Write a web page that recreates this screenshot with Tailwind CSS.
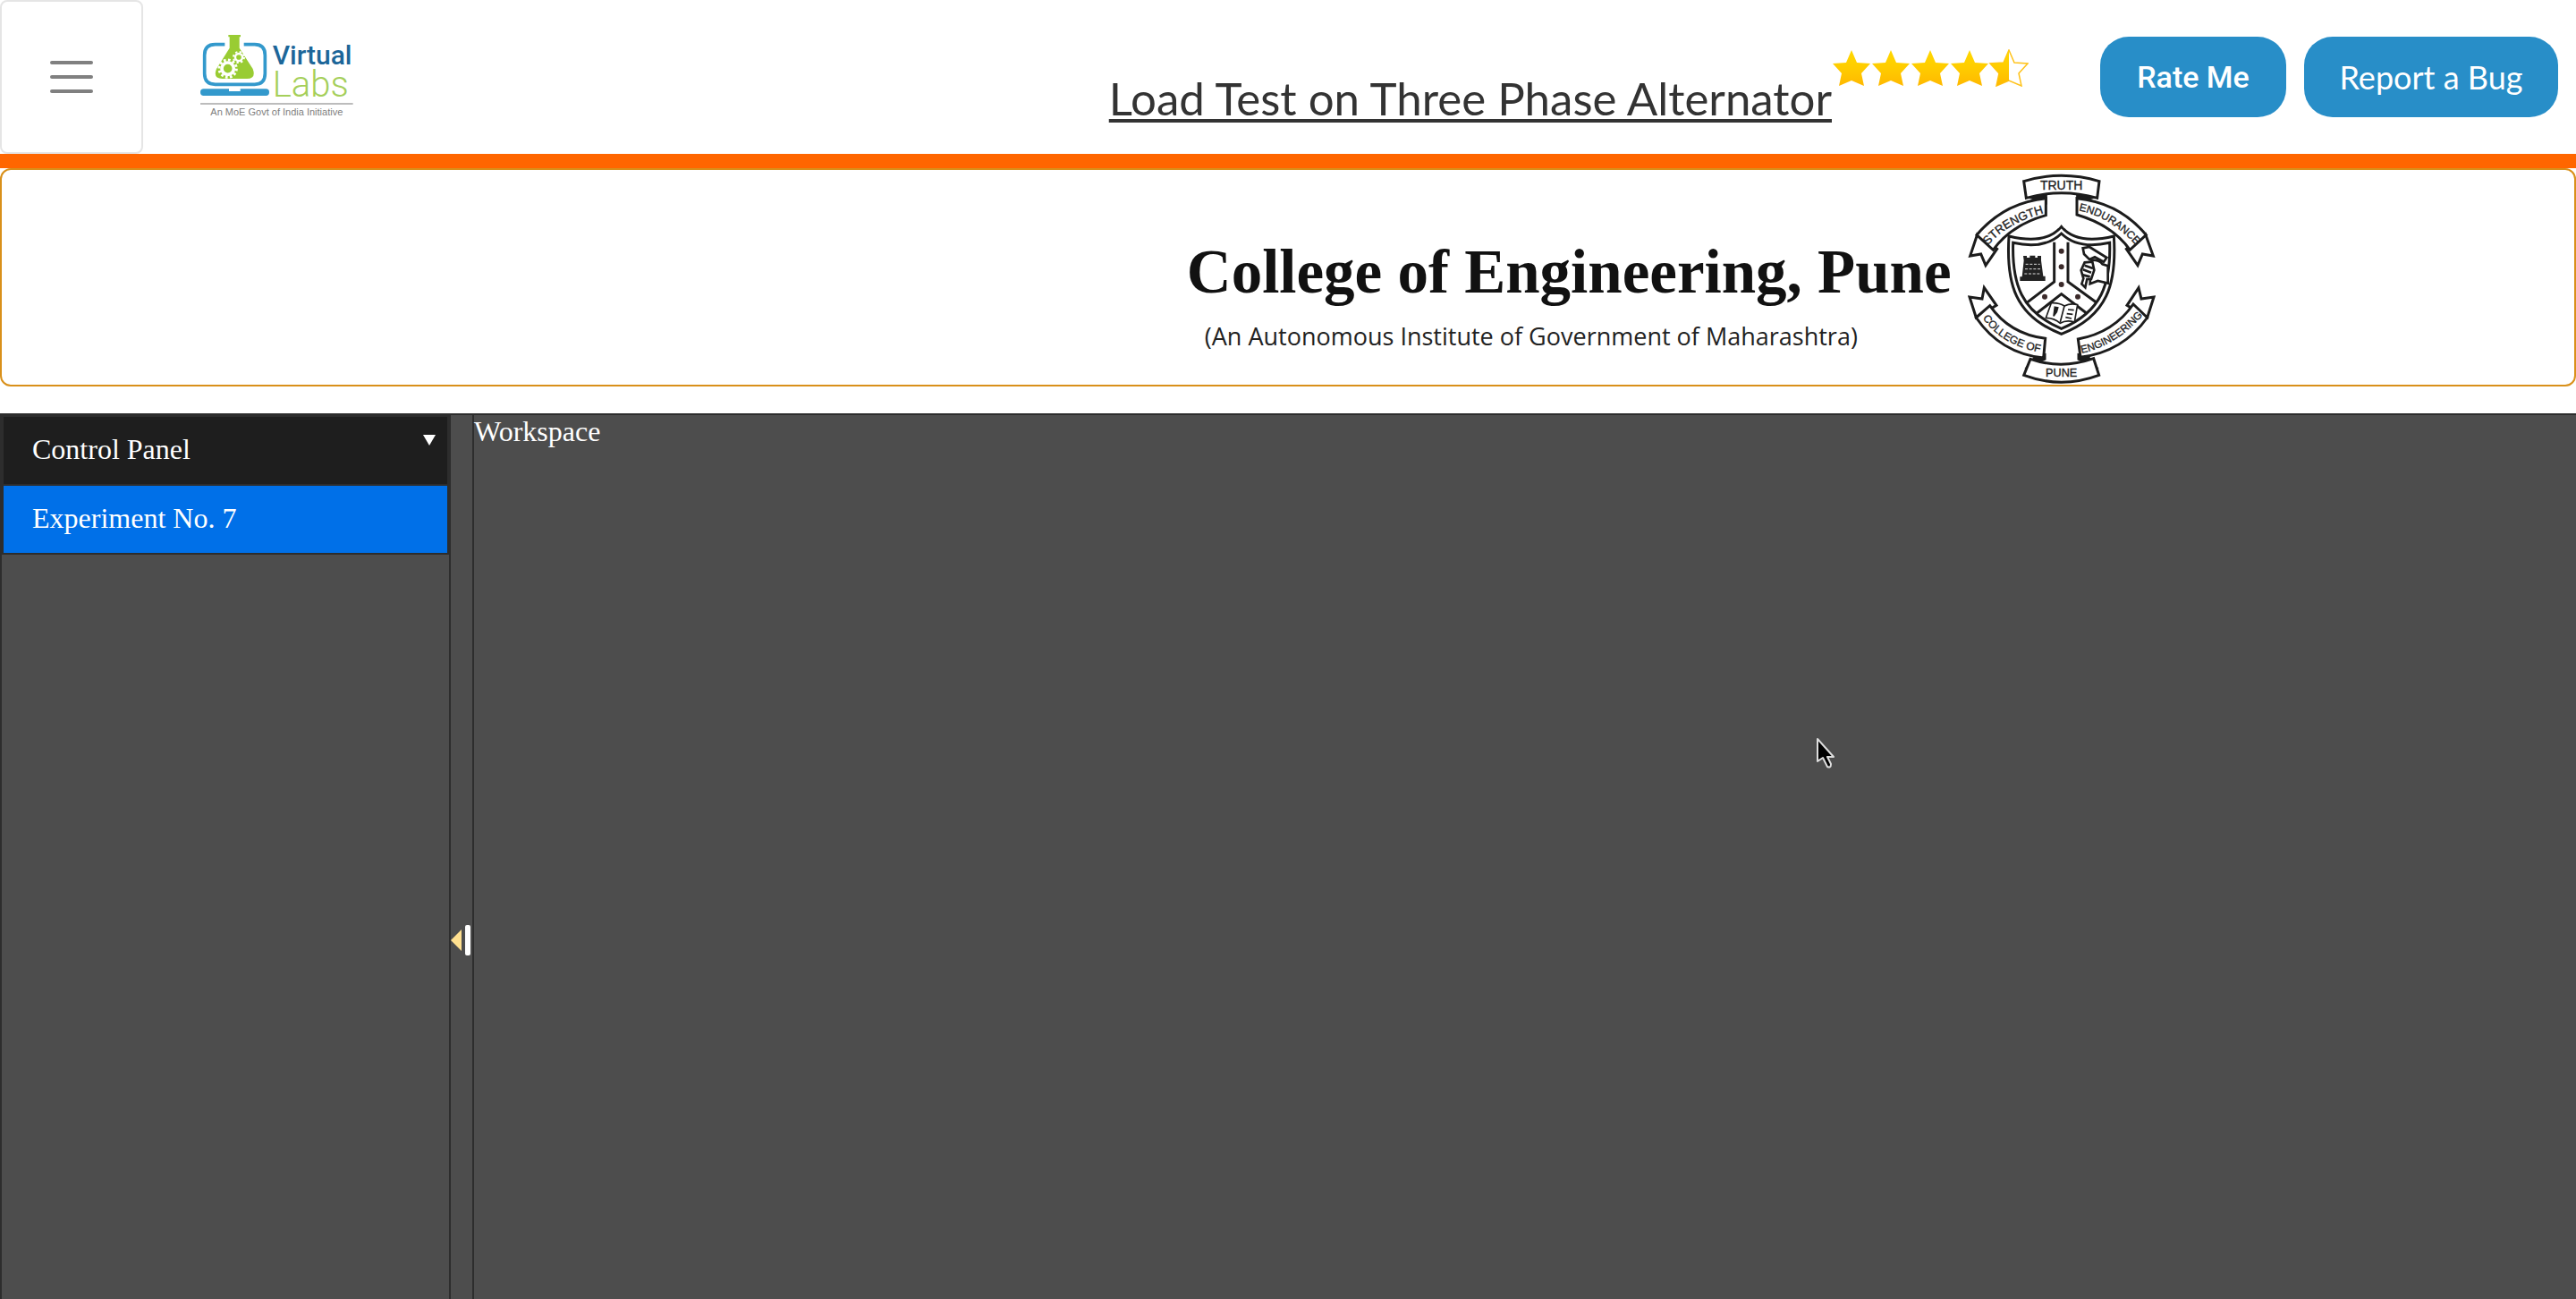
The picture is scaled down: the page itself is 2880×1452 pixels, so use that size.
<!DOCTYPE html>
<html lang="en">
<head>
<meta charset="utf-8">
<title>Load Test on Three Phase Alternator</title>
<script src="https://cdn.jsdelivr.net/npm/@tailwindcss/browser@4"></script>
</head>
<body class="flex min-h-screen flex-col bg-white">

<header class="flex h-[188px] items-center border-b-16 border-[#ff6600] pr-5">
  <button type="button" aria-label="Menu" class="flex h-full w-40 shrink-0 flex-col items-center justify-center gap-3 rounded-lg border-2 border-[#e5e5e5]">
    <span class="h-1 w-12 rounded-full bg-[#808080]"></span>
    <span class="h-1 w-12 rounded-full bg-[#808080]"></span>
    <span class="h-1 w-12 rounded-full bg-[#808080]"></span>
  </button>
  <a href="#" aria-label="Virtual Labs" class="ml-16 shrink-0">
    <svg class="h-[94px] w-[172px]" viewBox="672 116 516 282">
      <g fill="none" stroke="#3399cc" stroke-width="11">
        <path d="M754 148H722Q686 148 686 184V246Q686 282 722 282H854Q889 282 889 246V184Q889 148 854 148H818"/>
      </g>
      <path fill="#3399cc" d="M683 297H768V305H806V297H892Q903 297 903 308Q903 320 892 320H683Q672 320 672 308Q672 297 683 297Z"/>
      <path fill="#99cc33" d="M766 116H807V123H803V160L848 230Q860 263 828 263H746Q713 263 726 230L770 160V123H766Z"/>
      <g fill="none" stroke="#fff">
        <circle cx="764" cy="229" r="20" stroke-width="11"/>
        <circle cx="764" cy="229" r="29" stroke-width="9" stroke-dasharray="8 7.18"/>
        <circle cx="801" cy="191" r="12" stroke-width="7"/>
        <circle cx="801" cy="191" r="18" stroke-width="6" stroke-dasharray="7 7.14"/>
      </g>
      <text x="914" y="214" font-family="Roboto, sans-serif" font-weight="500" font-size="90" fill="#1c6699">Virtual</text>
      <text x="914" y="322" font-family="Roboto, sans-serif" font-weight="300" font-size="120" fill="#a5cf5a">Labs</text>
      <path d="M672 347H1184" stroke="#a6a6a6" stroke-width="5"/>
      <text x="706" y="387" font-family="Liberation Sans, sans-serif" font-size="33" fill="#808080">An MoE Govt of India Initiative</text>
    </svg>
  </a>

  <h1 class="ml-auto pt-12 font-['Lato'] text-[51px] leading-[60px] whitespace-nowrap text-[#333] underline decoration-4 underline-offset-4">Load Test on Three Phase Alternator</h1>
  <svg role="img" aria-label="Rated 4.5 out of 5" class="mb-5 h-[42px] w-[220px] shrink-0" viewBox="0 0 220 42">
    <defs>
      <linearGradient id="gold" x1="0" y1="0" x2="0" y2="1">
        <stop offset="0" stop-color="#ffd800"/><stop offset=".5" stop-color="#ffcc00"/><stop offset="1" stop-color="#ffb800"/>
      </linearGradient>
      <path id="star" d="M22 1L28 15L43 16L33 27L36 41L22 35L8 41L11 27L1 16L16 15Z"/>
      <clipPath id="half"><path d="M0 0H22V42H0Z"/></clipPath>
    </defs>
    <use href="#star" fill="url(#gold)"/>
    <use href="#star" x="44" fill="url(#gold)"/>
    <use href="#star" x="88" fill="url(#gold)"/>
    <use href="#star" x="132" fill="url(#gold)"/>
    <g transform="translate(176 0)">
      <use href="#star" fill="#fff" stroke="#ffc21a" stroke-width="1.5"/>
      <use href="#star" fill="url(#gold)" clip-path="url(#half)"/>
    </g>
  </svg>
  <button type="button" class="ml-20 h-[90px] w-[208px] shrink-0 rounded-[32px] bg-[#288ec8] font-['Roboto'] text-[34px] font-medium text-white">Rate Me</button>
  <button type="button" class="ml-5 h-[90px] w-[284px] shrink-0 rounded-[32px] bg-[#288ec8] font-['Lato'] text-[36px] text-white">Report a Bug</button>
</header>

<section class="mb-[30px] flex h-[244px] rounded-xl border-2 border-[#d9901a] pl-[46%]">
  <div class="flex flex-col gap-5 pt-[78px] text-[#111]">
    <h2 class="font-['Liberation_Serif'] text-[69px] leading-[72px] font-bold whitespace-nowrap">College of Engineering, Pune</h2>
    <p class="pl-5 font-['Open_Sans'] text-[27px] leading-8 font-medium whitespace-nowrap text-[#222]">(An Autonomous Institute of Government of Maharashtra)</p>
  </div>
  <svg role="img" aria-label="College crest" class="ml-[18px] h-[240px] w-[210px] shrink-0" viewBox="60 30 630 720">
    <defs>
      <path id="arcStrength" d="M128 284Q190 207 330 170"/>
      <path id="arcEndurance" d="M432 166Q550 190 640 302"/>
      <path id="arcCollege" d="M110 526Q175 622 320 644"/>
      <path id="arcEngineering" d="M442 644Q560 620 655 508"/>
    </defs>
    <g fill="#fff" stroke="#1c1c1c" stroke-width="9" stroke-linejoin="miter">
      <path d="M92 246L68 318L104 312L120 350L158 295Z"/>
      <path d="M656 246L682 318L646 312L630 350L592 295Z"/>
      <path d="M88 525L156 484L115 425L108 462L66 456Z"/>
      <path d="M662 525L594 484L633 425L642 462L684 456Z"/>
      <path fill="#1c1c1c" d="M256 118L322 116V140L290 128ZM494 118L428 116V140L460 128ZM264 686L318 664V650L286 658ZM486 686L432 664V650L464 658Z"/>
      <path d="M90 248Q180 140 322 125V182Q205 215 145 298Z"/>
      <path d="M658 248Q570 140 426 125V180Q545 215 604 298Z"/>
      <path d="M88 525L134 485Q200 580 320 595L314 660Q170 645 88 525Z"/>
      <path d="M662 525L615 480Q550 575 430 597L438 658Q580 640 662 525Z"/>
      <path d="M248 68Q374 30 501 68L494 124Q374 90 256 124Z"/>
      <path d="M270 664Q374 700 482 662L500 718Q374 765 248 718Z"/>
      <path d="M374 220Q425 282 550 252C560 410 530 520 374 580C218 520 188 410 198 252Q323 282 374 220Z"/>
      <path d="M374 243Q430 298 536 274C540 410 510 505 374 562C238 505 208 410 212 274Q318 298 374 243Z"/>
      <path fill="none" d="M350 272V405L258 475M396 272V405L492 475M292 510L374 446L458 510"/>
    </g>
    <g fill="#3b2a2a"><circle cx="374" cy="302" r="9"/><circle cx="374" cy="355" r="9"/><circle cx="374" cy="414" r="9"/><circle cx="318" cy="455" r="9"/><circle cx="429" cy="455" r="9"/></g>
    <path fill="#222" d="M246 318H258V324H268V317H286V324H294V318H306V334L313 386H320V402H235V388H242L248 334Z"/>
    <path fill="none" stroke="#ddd" stroke-width="3" stroke-dasharray="9 5" d="M254 346H302M252 362H304M250 378H306"/>
    <g fill="#fff" stroke="#1c1c1c" stroke-width="8">
      <path d="M474 332Q500 330 512 346L530 352V410L496 402L470 412Z"/>
      <path d="M446 292L468 288L526 324L516 338L486 322L468 330L450 312Z"/>
      <path d="M440 366L452 340L478 338L484 366L474 396L460 396L454 424L442 412L448 394Z"/>
      <path fill="none" d="M446 364L474 374M452 350L480 360M446 382L470 388"/>
      <path stroke-width="5" d="M340 476Q365 474 384 486Q405 476 428 482L418 540Q390 532 370 544Q350 526 322 526Z"/>
      <path stroke-width="5" fill="none" d="M384 486L370 540M396 498L416 500M392 512L412 514M388 524L408 528"/>
      <path stroke-width="5" fill="#1c1c1c" d="M352 490L362 492L358 506L348 520L350 506Z"/>
    </g>
    <g font-family="Liberation Sans, sans-serif" fill="#222" stroke="#222" stroke-width="1" font-size="40">
      <text x="374" y="96" text-anchor="middle" font-size="42">TRUTH</text>
      <text x="374" y="724" text-anchor="middle" font-size="38">PUNE</text>
      <text><textPath href="#arcStrength">STRENGTH</textPath></text>
      <text font-size="36"><textPath href="#arcEndurance">ENDURANCE</textPath></text>
      <text font-size="36"><textPath href="#arcCollege">COLLEGE OF</textPath></text>
      <text font-size="35"><textPath href="#arcEngineering">ENGINEERING</textPath></text>
    </g>
  </svg>
</section>

<main class="flex flex-1 border-t-2 border-l-2 border-[#2d2d2d] bg-[#4d4d4d] font-['Liberation_Serif'] text-[32px] leading-9 text-white">
  <nav class="w-[502px] shrink-0 border-r-2 border-[#2d2d2d]">
    <button type="button" class="flex h-[79px] w-full items-start justify-between border-2 border-[#2d2d2d] bg-[#1e1e1e] pt-[18px] pr-3 pl-8 text-left">
      <span>Control Panel</span>
      <svg class="mt-[2px] h-3 w-4" viewBox="0 0 16 12"><path fill="#fff" d="M1 0H15L8 12Z"/></svg>
    </button>
    <a href="#" class="flex h-[77px] items-start border-2 border-t-0 border-[#2d2d2d] bg-[#0070e8] pt-[18px] pl-8">Experiment No. 7</a>
  </nav>
  <div class="w-[26px] shrink-0 border-r-2 border-[#2d2d2d] pt-[570px]">
    <button type="button" aria-label="Collapse panel" class="flex items-center gap-1">
      <svg class="h-6 w-3" viewBox="0 0 12 24"><path fill="#ffe08f" d="M0 12L12 0V24Z"/></svg>
      <span class="h-[34px] w-[6px] rounded-xs bg-white"></span>
    </button>
  </div>
  <section class="relative flex-1">
    <h2>Workspace</h2>
    <svg class="absolute top-[360px] left-[1500px] h-[38px] w-6" viewBox="0 0 24 38"><path fill="#000" stroke="#ddd" stroke-width="2" stroke-linejoin="round" d="M2 2V27L8 23L13 33Q17 35 17 30L13 22H20Z"/></svg>
  </section>
</main>
</body>
</html>
